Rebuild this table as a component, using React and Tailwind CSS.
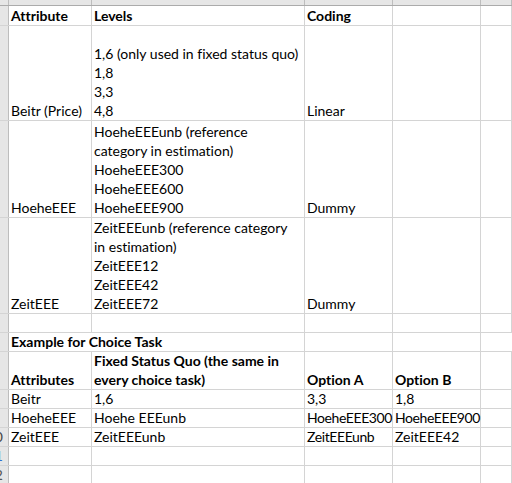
// Spreadsheet excerpt: attribute levels + example choice task
const font = { fontFamily: 'Lato, "Open Sans", sans-serif' };

const COLS = ['w-[83px]', 'w-[213px]', 'w-[88px]', 'w-[88px]', 'flex-1'];

function Gutter({ num, color = 'text-[#444]' }) {
  return (
    <div className="w-[9px] shrink-0 bg-[#e6e6e6] border-r border-[#bdbdbd] overflow-hidden flex flex-col justify-end">
      {num && (
        <div className={`w-[30px] -ml-[27px] text-right leading-[19px] ${color}`}>{num}</div>
      )}
    </div>
  );
}

function Cell({ w, cell, children }) {
  const bold = cell && cell.bold ? 'font-bold' : '';
  const tight = cell && cell.tight ? 'tracking-[-0.4px]' : '';
  return (
    <div className={`${w} shrink-0 border-r border-[#d4d4d4] flex flex-col justify-end pl-[2px] leading-[19px] whitespace-nowrap ${bold} ${tight}`}>
      {children}
    </div>
  );
}

function Row({ h, num, numColor, cells }) {
  return (
    <div className={`flex border-b border-[#d4d4d4] ${h}`}>
      <Gutter num={num} color={numColor} />
      {COLS.map((w, i) => (
        <Cell key={i} w={w} cell={cells[i]}>
          {cells[i] && cells[i].lines.map((l, j) => <div key={j}>{l}</div>)}
        </Cell>
      ))}
    </div>
  );
}

const t = (...lines) => ({ lines });
const b = (...lines) => ({ lines, bold: true });
const n = (...lines) => ({ lines, tight: true });

export default function App() {
  return (
    <div
      className="w-[512px] h-[483px] overflow-hidden bg-white text-black text-[14px] [font-variant-ligatures:none]"
      style={font}
    >
      {/* column header band, letters mostly scrolled out of view */}
      <div className="flex h-[6px] bg-[#e6e6e6] border-b border-[#ababab] overflow-hidden">
        <div className="w-[9px] shrink-0 border-r border-[#bdbdbd]" />
        {['A', 'B', 'C', 'D', ''].map((c, i) => (
          <div key={i} className={`${COLS[i]} shrink-0 border-r border-[#bdbdbd] text-center text-[#444] leading-[19px] -mt-[15px]`}>
            {c}
          </div>
        ))}
      </div>

      <Row h="h-[20px]" cells={[b('Attribute'), b('Levels'), b('Coding')]} />
      <Row
        h="h-[95px]"
        cells={[t('Beitr (Price)'), t('1,6 (only used in fixed status quo)', '1,8', '3,3', '4,8'), t('Linear')]}
      />
      <Row
        h="h-[97px]"
        cells={[
          t('HoeheEEE'),
          t('HoeheEEEunb (reference', 'category in estimation)', 'HoeheEEE300', 'HoeheEEE600', 'HoeheEEE900'),
          t('Dummy'),
        ]}
      />
      <Row
        h="h-[96px]"
        cells={[
          t('ZeitEEE'),
          t('ZeitEEEunb (reference category', 'in estimation)', 'ZeitEEE12', 'ZeitEEE42', 'ZeitEEE72'),
          t('Dummy'),
        ]}
      />
      <Row h="h-[19px]" cells={[]} />

      {/* title row overflows into column B */}
      <div className="flex border-b border-[#d4d4d4] h-[19px]">
        <Gutter />
        <div className="w-[296px] shrink-0 border-r border-[#d4d4d4] flex flex-col justify-end pl-[2px] leading-[19px] font-bold">
          Example for Choice Task
        </div>
        <div className="w-[88px] shrink-0 border-r border-[#d4d4d4]" />
        <div className="w-[88px] shrink-0 border-r border-[#d4d4d4]" />
        <div className="flex-1" />
      </div>

      <Row
        h="h-[38px]"
        cells={[b('Attributes'), b('Fixed Status Quo (the same in', 'every choice task)'), b('Option A'), b('Option B')]}
      />
      <Row h="h-[19px]" cells={[t('Beitr'), t('1,6'), t('3,3'), t('1,8')]} />
      <Row h="h-[19px]" cells={[t('HoeheEEE'), t('Hoehe EEEunb'), n('HoeheEEE300'), n('HoeheEEE900')]} />
      <Row h="h-[19px]" num="20" cells={[t('ZeitEEE'), t('ZeitEEEunb'), n('ZeitEEEunb'), t('ZeitEEE42')]} />
      <Row h="h-[19px]" num="21" numColor="text-[#2f6fcf]" cells={[]} />
      <Row h="h-[19px]" num="22" numColor="text-[#555]" cells={[]} />
    </div>
  );
}
